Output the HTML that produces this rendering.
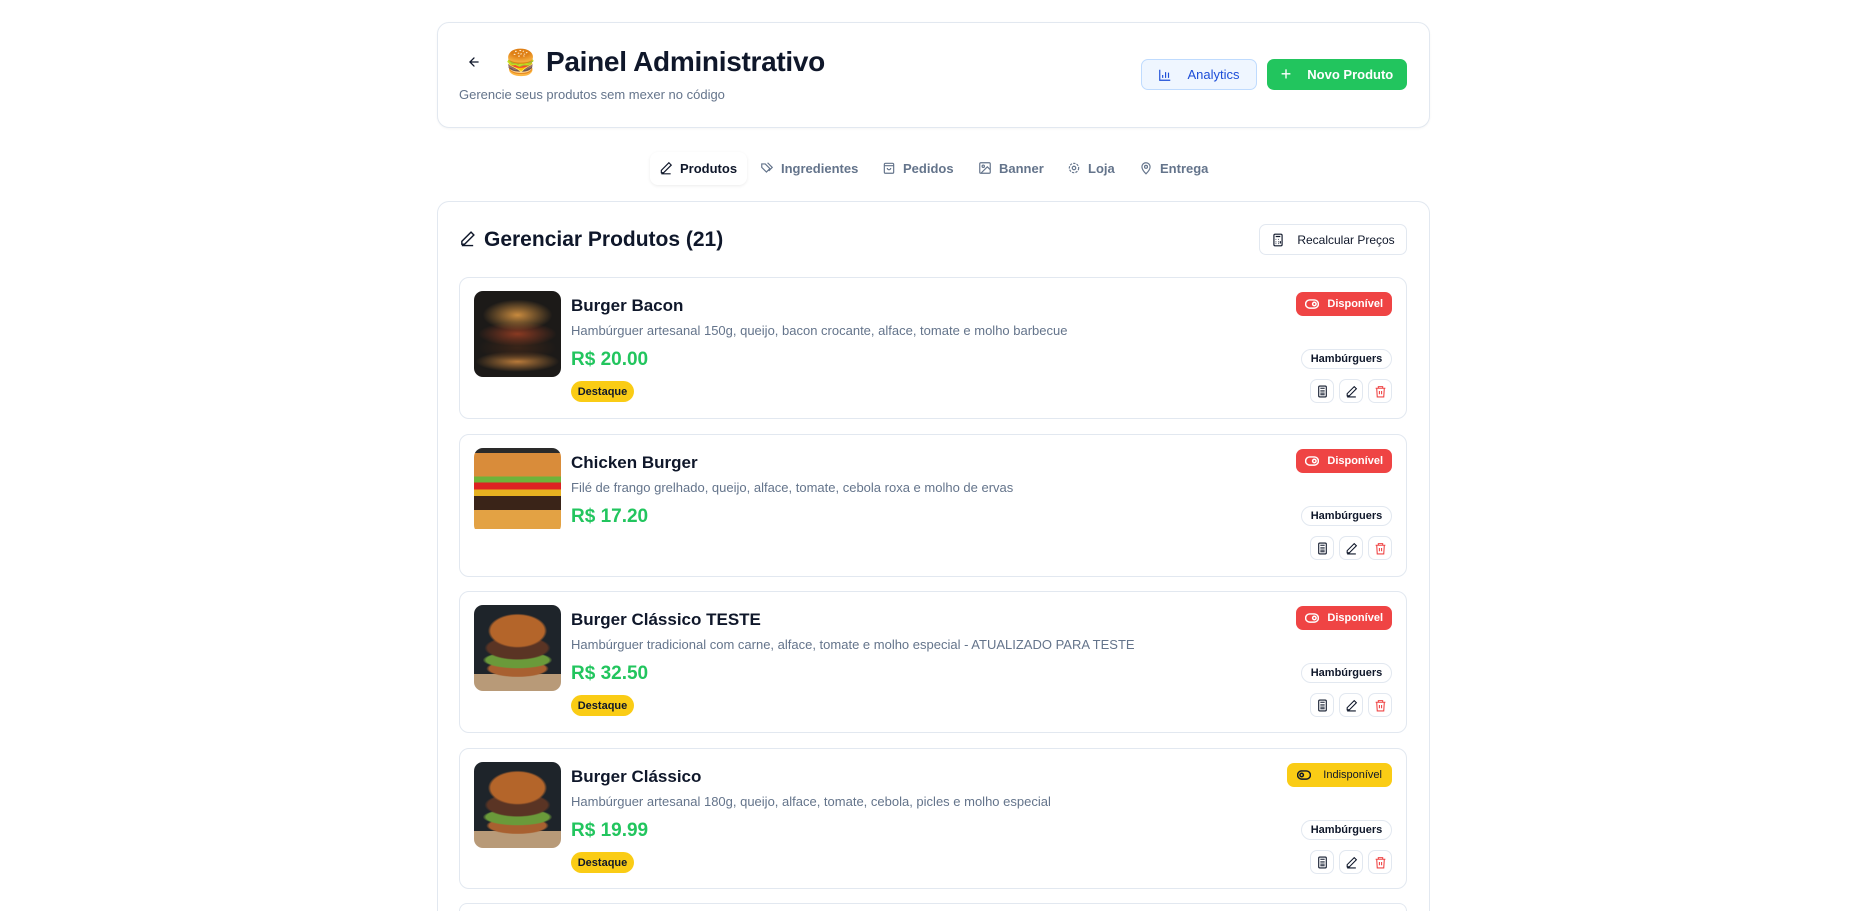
<!DOCTYPE html>
<html style="overflow:hidden;height:911px"><head><meta charset="utf-8"><style>
*{box-sizing:border-box;margin:0;padding:0}
body{width:1866px;height:911px;overflow:hidden;background:#fff;font-family:"Liberation Sans","Noto Color Emoji",sans-serif;color:#0f172a;position:relative}
.abs{position:absolute}
.card{position:absolute;border:1px solid #e2e8f0;border-radius:12px;background:#fff;box-shadow:0 1px 2px rgba(0,0,0,.04)}
svg{display:block}
.btn{position:absolute;display:flex;align-items:center;justify-content:center;border-radius:7px;font-size:13px;font-weight:bold}
.tab{position:absolute;top:152px;height:32px;display:flex;align-items:center;gap:7px;font-size:13px;color:#64748b;font-weight:bold}
.pc{position:absolute;left:459px;width:948px;border:1px solid #e2e8f0;border-radius:10px;background:#fff}
.img{position:absolute;left:14px;top:13px;width:87px;height:86px;border-radius:9px;overflow:hidden}
.name{position:absolute;left:111px;top:18px;font-size:17px;font-weight:bold}
.desc{position:absolute;left:111px;top:45px;font-size:13px;color:#64748b}
.price{position:absolute;left:111px;top:71px;font-size:19px;font-weight:bold;color:#22c55e}
.dest{position:absolute;left:111px;top:103px;height:21px;width:63px;border-radius:11px;background:#facc15;font-size:11px;font-weight:bold;display:flex;align-items:center;justify-content:center}
.st{position:absolute;right:14px;top:14px;height:24px;border-radius:7px;font-size:11px;font-weight:bold;display:flex;align-items:center;gap:8px;padding:0 9px}
.cat{position:absolute;right:14px;top:71px;height:20px;width:91px;border:1px solid #e2e8f0;border-radius:10px;font-size:11px;font-weight:bold;display:flex;align-items:center;justify-content:center}
.act{position:absolute;top:101px;width:24px;height:24px;border:1px solid #e2e8f0;border-radius:7px;display:flex;align-items:center;justify-content:center}
</style></head><body>

<div class="card" style="left:437px;top:22px;width:993px;height:106px"></div>
<svg class="abs" style="left:467px;top:55px" width="14" height="14" viewBox="0 0 24 24" fill="none" stroke="#0f172a" stroke-width="2.2" stroke-linecap="round"><path d="M19 12H5M12 19l-7-7 7-7"/></svg>
<div class="abs" style="left:505px;top:49px;font-size:25px">🍔</div>
<div class="abs" style="left:546px;top:46px;font-size:28px;font-weight:bold;letter-spacing:-.3px">Painel Administrativo</div>
<div class="abs" style="left:459px;top:87px;font-size:13px;color:#64748b">Gerencie seus produtos sem mexer no código</div>
<div class="btn" style="left:1141px;top:59px;width:116px;height:31px;background:#eff6ff;border:1px solid #bfdbfe;color:#1d4ed8;font-weight:normal"><svg width="14" height="14" viewBox="0 0 24 24" fill="none" stroke="#1d4ed8" stroke-width="2"><path d="M3 3v18h18M8 17v-5M13 17V7M18 17v-9"/></svg><span style="margin-left:15px">Analytics</span></div>
<div class="btn" style="left:1267px;top:59px;width:140px;height:31px;background:#22c55e;color:#fff"><span style="font-size:18px;font-weight:normal;margin-right:16px">+</span>Novo Produto</div>

<div class="abs" style="left:650px;top:152px;width:97px;height:33px;border-radius:8px;box-shadow:0 1px 3px rgba(0,0,0,.08)"></div>
<div class="tab" style="left:659px;color:#0f172a"><svg width="14" height="14" viewBox="0 0 24 24" fill="none" stroke="#0f172a" stroke-width="2"><path d="M17 3l4 4L8 20H4v-4z M4 22h16"/></svg>Produtos</div>
<div class="tab" style="left:760px"><svg width="14" height="14" viewBox="0 0 24 24" fill="none" stroke="#64748b" stroke-width="2"><path d="M3 5v6l8 8 6-6-8-8H3zM13 3l8 8-6 6"/></svg>Ingredientes</div>
<div class="tab" style="left:882px"><svg width="14" height="14" viewBox="0 0 24 24" fill="none" stroke="#64748b" stroke-width="2"><rect x="4" y="4" width="16" height="17" rx="2"/><path d="M4 8h16M9 12a3 3 0 006 0"/></svg>Pedidos</div>
<div class="tab" style="left:978px"><svg width="14" height="14" viewBox="0 0 24 24" fill="none" stroke="#64748b" stroke-width="2"><rect x="3" y="3" width="18" height="18" rx="2"/><circle cx="9" cy="9" r="2"/><path d="M21 15l-5-5L5 21"/></svg>Banner</div>
<div class="tab" style="left:1067px"><svg width="14" height="14" viewBox="0 0 24 24" fill="none" stroke="#64748b" stroke-width="2"><circle cx="12" cy="12" r="3"/><circle cx="12" cy="12" r="8" stroke-dasharray="4 2"/></svg>Loja</div>
<div class="tab" style="left:1139px"><svg width="14" height="14" viewBox="0 0 24 24" fill="none" stroke="#64748b" stroke-width="2"><path d="M12 22s-7-7-7-12a7 7 0 0114 0c0 5-7 12-7 12z"/><circle cx="12" cy="10" r="2.5"/></svg>Entrega</div>

<div class="abs" style="left:437px;top:201px;width:993px;height:710px;border:1px solid #e2e8f0;border-bottom:none;border-radius:12px 12px 0 0"></div>
<svg class="abs" style="left:459px;top:230px" width="17" height="17" viewBox="0 0 24 24" fill="none" stroke="#0f172a" stroke-width="2"><path d="M17 3l4 4L8 20H4v-4z M4 22h16"/></svg>
<div class="abs" style="left:484px;top:228px;font-size:21px;font-weight:bold">Gerenciar Produtos (21)</div>
<div class="btn" style="left:1259px;top:224px;width:148px;height:31px;border:1px solid #e2e8f0;font-weight:normal;font-size:12px;color:#0f172a"><svg width="14" height="14" viewBox="0 0 24 24" fill="none" stroke="#0f172a" stroke-width="2"><rect x="5" y="2" width="14" height="20" rx="2"/><path d="M8 6h8M8 11h1M12 11h1M16 11h0M8 15h1M12 15h1M8 18h1M12 18h1M16 14v4"/></svg><span style="margin-left:12px">Recalcular Preços</span></div>

<div class="pc" style="top:277px;height:142px">
 <div class="img" style="background:radial-gradient(ellipse 40% 18% at 50% 28%,#c88a3e,transparent),radial-gradient(ellipse 45% 14% at 50% 50%,#8a3a22,transparent),radial-gradient(ellipse 45% 16% at 50% 66%,#3a2418,transparent),radial-gradient(ellipse 48% 12% at 50% 82%,#b87a3a,transparent),#1c1a18"></div>
 <div class="name">Burger Bacon</div><div class="desc">Hambúrguer artesanal 150g, queijo, bacon crocante, alface, tomate e molho barbecue</div>
 <div class="price">R$ 20.00</div><div class="dest">Destaque</div>
 <div class="st" style="background:#ef4444;color:#fff"><svg width="14" height="10" viewBox="0 0 24 16" fill="none" stroke="#fff" stroke-width="2.5"><rect x="1" y="1" width="22" height="14" rx="7"/><circle cx="16" cy="8" r="3"/></svg>Disponível</div>
 <div class="cat">Hambúrguers</div>
 <div class="act" style="right:72px"><svg width="13" height="13" viewBox="0 0 24 24" fill="none" stroke="#0f172a" stroke-width="2"><rect x="5" y="2" width="14" height="20" rx="2"/><path d="M8 6h8M8 11h8M8 15h8M8 18h8"/></svg></div>
 <div class="act" style="right:43px"><svg width="13" height="13" viewBox="0 0 24 24" fill="none" stroke="#0f172a" stroke-width="2"><path d="M17 3l4 4L8 20H4v-4z M4 22h16"/></svg></div>
 <div class="act" style="right:14px"><svg width="13" height="13" viewBox="0 0 24 24" fill="none" stroke="#ef4444" stroke-width="2"><path d="M3 6h18M8 6V3h8v3M5 6l1 16h12l1-16M10 11v6M14 11v6"/></svg></div>
</div>

<div class="pc" style="top:434px;height:143px">
 <div class="img" style="background:linear-gradient(#2a2a2a 0 6%,#d98c3a 6% 33%,#6fb33a 33% 40%,#d22 40% 48%,#e6b020 48% 56%,#3a2418 56% 72%,#e3a244 72% 94%,#fff 94%)"></div>
 <div class="name">Chicken Burger</div><div class="desc">Filé de frango grelhado, queijo, alface, tomate, cebola roxa e molho de ervas</div>
 <div class="price">R$ 17.20</div>
 <div class="st" style="background:#ef4444;color:#fff"><svg width="14" height="10" viewBox="0 0 24 16" fill="none" stroke="#fff" stroke-width="2.5"><rect x="1" y="1" width="22" height="14" rx="7"/><circle cx="16" cy="8" r="3"/></svg>Disponível</div>
 <div class="cat">Hambúrguers</div>
 <div class="act" style="right:72px"><svg width="13" height="13" viewBox="0 0 24 24" fill="none" stroke="#0f172a" stroke-width="2"><rect x="5" y="2" width="14" height="20" rx="2"/><path d="M8 6h8M8 11h8M8 15h8M8 18h8"/></svg></div>
 <div class="act" style="right:43px"><svg width="13" height="13" viewBox="0 0 24 24" fill="none" stroke="#0f172a" stroke-width="2"><path d="M17 3l4 4L8 20H4v-4z M4 22h16"/></svg></div>
 <div class="act" style="right:14px"><svg width="13" height="13" viewBox="0 0 24 24" fill="none" stroke="#ef4444" stroke-width="2"><path d="M3 6h18M8 6V3h8v3M5 6l1 16h12l1-16M10 11v6M14 11v6"/></svg></div>
</div>

<div class="pc" style="top:591px;height:142px">
 <div class="img" style="background:radial-gradient(ellipse 34% 20% at 50% 30%,#b4652a 90%,transparent),radial-gradient(ellipse 38% 14% at 50% 50%,#5a3424 90%,transparent),radial-gradient(ellipse 40% 10% at 50% 64%,#6a9a3a 90%,transparent),radial-gradient(ellipse 36% 10% at 50% 74%,#a86030 90%,transparent),linear-gradient(#1e242a 0 80%,#b89a78 80%)"></div>
 <div class="name">Burger Clássico TESTE</div><div class="desc">Hambúrguer tradicional com carne, alface, tomate e molho especial - ATUALIZADO PARA TESTE</div>
 <div class="price">R$ 32.50</div><div class="dest">Destaque</div>
 <div class="st" style="background:#ef4444;color:#fff"><svg width="14" height="10" viewBox="0 0 24 16" fill="none" stroke="#fff" stroke-width="2.5"><rect x="1" y="1" width="22" height="14" rx="7"/><circle cx="16" cy="8" r="3"/></svg>Disponível</div>
 <div class="cat">Hambúrguers</div>
 <div class="act" style="right:72px"><svg width="13" height="13" viewBox="0 0 24 24" fill="none" stroke="#0f172a" stroke-width="2"><rect x="5" y="2" width="14" height="20" rx="2"/><path d="M8 6h8M8 11h8M8 15h8M8 18h8"/></svg></div>
 <div class="act" style="right:43px"><svg width="13" height="13" viewBox="0 0 24 24" fill="none" stroke="#0f172a" stroke-width="2"><path d="M17 3l4 4L8 20H4v-4z M4 22h16"/></svg></div>
 <div class="act" style="right:14px"><svg width="13" height="13" viewBox="0 0 24 24" fill="none" stroke="#ef4444" stroke-width="2"><path d="M3 6h18M8 6V3h8v3M5 6l1 16h12l1-16M10 11v6M14 11v6"/></svg></div>
</div>

<div class="pc" style="top:748px;height:141px">
 <div class="img" style="background:radial-gradient(ellipse 34% 20% at 50% 30%,#b4652a 90%,transparent),radial-gradient(ellipse 38% 14% at 50% 50%,#5a3424 90%,transparent),radial-gradient(ellipse 40% 10% at 50% 64%,#6a9a3a 90%,transparent),radial-gradient(ellipse 36% 10% at 50% 74%,#a86030 90%,transparent),linear-gradient(#1e242a 0 80%,#b89a78 80%)"></div>
 <div class="name">Burger Clássico</div><div class="desc">Hambúrguer artesanal 180g, queijo, alface, tomate, cebola, picles e molho especial</div>
 <div class="price">R$ 19.99</div><div class="dest">Destaque</div>
 <div class="st" style="background:#facc15;color:#0f172a;font-weight:normal;padding:0 10px;gap:12px"><svg width="14" height="10" viewBox="0 0 24 16" fill="none" stroke="#0f172a" stroke-width="2.5"><rect x="1" y="1" width="22" height="14" rx="7"/><circle cx="8" cy="8" r="3"/></svg>Indisponível</div>
 <div class="cat">Hambúrguers</div>
 <div class="act" style="right:72px"><svg width="13" height="13" viewBox="0 0 24 24" fill="none" stroke="#0f172a" stroke-width="2"><rect x="5" y="2" width="14" height="20" rx="2"/><path d="M8 6h8M8 11h8M8 15h8M8 18h8"/></svg></div>
 <div class="act" style="right:43px"><svg width="13" height="13" viewBox="0 0 24 24" fill="none" stroke="#0f172a" stroke-width="2"><path d="M17 3l4 4L8 20H4v-4z M4 22h16"/></svg></div>
 <div class="act" style="right:14px"><svg width="13" height="13" viewBox="0 0 24 24" fill="none" stroke="#ef4444" stroke-width="2"><path d="M3 6h18M8 6V3h8v3M5 6l1 16h12l1-16M10 11v6M14 11v6"/></svg></div>
</div>

<div class="abs" style="left:459px;top:903px;width:948px;height:8px;border:1px solid #e2e8f0;border-bottom:none;border-radius:10px 10px 0 0"></div>
</body></html>
